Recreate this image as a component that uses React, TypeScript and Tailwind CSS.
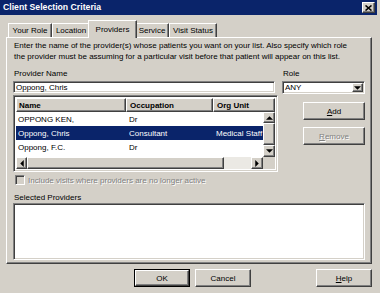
import React from 'react';

const raised =
  'border border-t-white border-l-white border-r-[#404040] border-b-[#404040] shadow-[inset_-1px_-1px_0_#808080]';
const sunken =
  'border border-t-[#808080] border-l-[#808080] border-r-white border-b-white shadow-[inset_1px_1px_0_#404040,inset_-1px_-1px_0_#d4d0c8]';

const Arrow = ({ dir, gray }: { dir: 'up' | 'down' | 'left' | 'right'; gray?: boolean }) => {
  const pts = {
    up: '0,4 4,0 8,4',
    down: '0,0 8,0 4,4',
    left: '4,0 4,8 0,4',
    right: '0,0 0,8 4,4',
  }[dir];
  const vertical = dir === 'up' || dir === 'down';
  return (
    <svg width={vertical ? 7 : 4} height={vertical ? 4 : 7} viewBox={vertical ? '0 0 8 4' : '0 0 4 8'}>
      <polygon points={pts} fill={gray ? '#808080' : '#000'} />
    </svg>
  );
};

const Btn = ({
  children,
  disabled,
  isDefault,
  className = '',
}: {
  children: React.ReactNode;
  disabled?: boolean;
  isDefault?: boolean;
  className?: string;
}) => (
  <div className={`${isDefault ? 'border border-black' : ''} ${className}`}>
    <div
      className={`${raised} h-full w-full flex items-center justify-center bg-[#d4d0c8] ${
        disabled ? 'text-[#808080] [text-shadow:1px_1px_0_#fff]' : 'text-black'
      }`}
    >
      {children}
    </div>
  </div>
);

const Tab = ({ label, w, active }: { label: string; w: string; active?: boolean }) => (
  <div
    className={`${w} flex items-center justify-center bg-[#d4d0c8] border-t border-l border-r border-t-white border-l-white border-r-[#404040] shadow-[inset_-1px_0_0_#808080] ${
      active ? 'h-[18px] -mb-px z-10 relative -mx-[2px]' : 'h-[14px]'
    }`}
  >
    {label}
  </div>
);

const rows = [
  { name: 'OPPONG KEN,', occ: 'Dr', org: '' },
  { name: 'Oppong, Chris', occ: 'Consultant', org: 'Medical Staff', selected: true },
  { name: 'Oppong, F.C.', occ: 'Dr', org: '' },
];

export default function App() {
  return (
    <div className="w-[380px] h-[293px] bg-[#d4d0c8] flex flex-col overflow-hidden pr-[3px] font-['Liberation_Sans',Arial,sans-serif] text-[8px] leading-[11px] text-black">
      {/* Title bar */}
      <div className="h-[15px] bg-[#0a246a] flex items-center pl-[3px] pr-[2px]">
        <span className="text-white font-bold text-[8.7px]">Client Selection Criteria</span>
        <div className={`${raised} ml-auto w-[13px] h-[11px] bg-[#d4d0c8] flex items-center justify-center`}>
          <svg width="7" height="6" viewBox="0 0 7 6">
            <path d="M0.5 0.5 L6.5 5.5 M6.5 0.5 L0.5 5.5" stroke="#000" strokeWidth="1.6" />
          </svg>
        </div>
      </div>

      <div className="flex flex-col pl-[6px]">
        {/* Tabs */}
        <div className="flex items-end h-[22px] pl-[2px]">
          <Tab label="Your Role" w="w-[44px]" />
          <Tab label="Location" w="w-[38px]" />
          <Tab label="Providers" w="w-[49px]" active />
          <Tab label="Service" w="w-[34px]" />
          <Tab label="Visit Status" w="w-[48px]" />
        </div>

        {/* Panel */}
        <div className={`${raised} w-[366px] h-[227px] flex flex-col pl-[6px]`}>
          <div className="mt-[2px] whitespace-nowrap pl-[1px]">
            Enter the name of the provider(s) whose patients you want on your list. Also specify which role
            <br />
            the provider must be assuming for a particular visit before that patient will appear on this list.
          </div>

          <div className="flex mt-[6px]">
            <div className="w-[265px] flex flex-col">
              <div className="h-[11px] pl-[1px]">Provider Name</div>
              <div className={`${sunken} mt-[2px] h-[12px] w-[262px] bg-white flex items-center pl-[2px]`}>
                Oppong, Chris
              </div>

              {/* Provider list */}
              <div className={`${sunken} mt-[2px] h-[77px] bg-white flex flex-col p-[2px]`}>
                <div className="flex h-[15px] font-bold bg-[#d4d0c8]">
                  <div className={`${raised} w-[110px] flex items-center pl-[2px]`}>Name</div>
                  <div className={`${raised} w-[87px] flex items-center pl-[3px]`}>Occupation</div>
                  <div className={`${raised} flex-1 flex items-center pl-[3px]`}>Org Unit</div>
                </div>
                <div className="flex h-[46px]">
                  <div className="flex-1 flex flex-col overflow-hidden">
                    {rows.map((r) => (
                      <div
                        key={r.name}
                        className={`flex h-[14px] items-center shrink-0 whitespace-nowrap ${
                          r.selected ? 'bg-[#0a246a] text-white' : ''
                        }`}
                      >
                        <div className="w-[110px] shrink-0 pl-[2px]">{r.name}</div>
                        <div className="w-[87px] shrink-0 pl-[3px]">{r.occ}</div>
                        <div className="pl-[3px]">{r.org}</div>
                      </div>
                    ))}
                  </div>
                  <div className="w-[12px] flex flex-col bg-[#ebe9e4]">
                    <div className={`${raised} h-[11px] bg-[#d4d0c8] flex items-center justify-center`}>
                      <Arrow dir="up" />
                    </div>
                    <div className={`${raised} h-[22px] bg-[#d4d0c8]`} />
                    <div className="flex-1" />
                    <div className={`${raised} h-[12px] bg-[#d4d0c8] flex items-center justify-center`}>
                      <Arrow dir="down" />
                    </div>
                  </div>
                </div>
                <div className="flex h-[12px] bg-[#ebe9e4]">
                  <div className={`${raised} w-[11px] bg-[#d4d0c8] flex items-center justify-center`}>
                    <Arrow dir="left" />
                  </div>
                  <div className={`${raised} w-[197px] bg-[#d4d0c8]`} />
                  <div className="flex-1" />
                  <div className={`${raised} w-[12px] bg-[#d4d0c8] flex items-center justify-center`}>
                    <Arrow dir="right" />
                  </div>
                  <div className="w-[12px] bg-[#d4d0c8]" />
                </div>
              </div>
            </div>

            <div className="ml-[4px] w-[83px] flex flex-col">
              <div className="h-[11px] pl-[1px]">Role</div>
              <div className={`${sunken} mt-[2px] h-[13px] bg-white flex items-center pl-[2px] pr-[1px]`}>
                <span>ANY</span>
                <div className={`${raised} ml-auto w-[11px] h-[9px] bg-[#d4d0c8] flex items-center justify-center`}>
                  <Arrow dir="down" />
                </div>
              </div>
              <Btn className="mt-[8px] h-[18px] w-[62px] self-end">
                <span>
                  <span className="underline">A</span>dd
                </span>
              </Btn>
              <Btn className="mt-[7px] h-[18px] w-[62px] self-end" disabled>
                <span>
                  <span className="underline">R</span>emove
                </span>
              </Btn>
            </div>
          </div>

          <div className="flex items-center mt-[3px] h-[10px] ml-[2px]">
            <div className={`${sunken} w-[10px] h-[10px] bg-[#d4d0c8]`} />
            <span className="ml-[3px] text-[#808080] [text-shadow:1px_1px_0_#fff]">
              Include visits where providers are no longer active
            </span>
          </div>

          <div className="mt-[7px] h-[11px] pl-[1px]">Selected Providers</div>
          <div className={`${sunken} h-[57px] w-[352px] bg-white`} />
        </div>

        {/* Dialog buttons */}
        <div className="flex mt-[5px] h-[18px]">
          <Btn isDefault className="ml-[128px] w-[56px]">OK</Btn>
          <Btn className="ml-[5px] w-[56px]">Cancel</Btn>
          <Btn className="ml-[65px] w-[56px]">
            <span>
              <span className="underline">H</span>elp
            </span>
          </Btn>
        </div>
      </div>
    </div>
  );
}
